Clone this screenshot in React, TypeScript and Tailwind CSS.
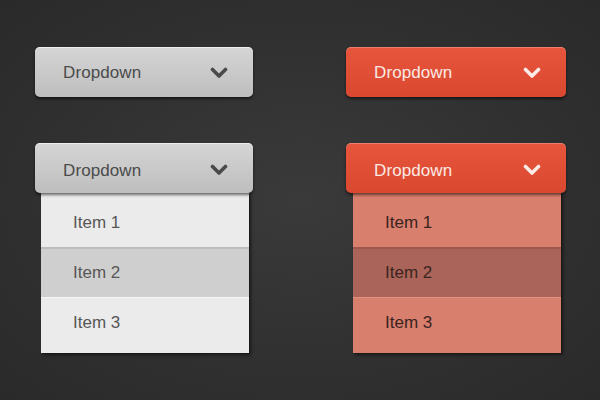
import React from "react";

type Variant = "gray" | "red";

function Chevron({ color }: { color: string }) {
	return (
		<svg width="18" height="12" viewBox="0 0 18 12" fill="none">
			<polyline
				points="2.5,2.5 9,9 15.5,2.5"
				stroke={color}
				strokeWidth="3.6"
				strokeLinecap="round"
				strokeLinejoin="round"
			/>
		</svg>
	);
}

function Button({ variant, open }: { variant: Variant; open?: boolean }) {
	const gray = variant === "gray";
	return (
		<div
			className={`relative z-10 flex items-center justify-between h-[50px] rounded-[5px] pl-7 pr-[25px] ${
				open ? "pt-[4px]" : "pt-px"
			} ${
				gray
					? "bg-gradient-to-b from-[#d5d5d5] to-[#bebebe] text-[#4b4b4b] shadow-[inset_0_1px_0_rgba(255,255,255,0.6),0_2px_3px_rgba(0,0,0,0.55)]"
					: "bg-gradient-to-b from-[#e6553c] to-[#d9482f] text-[#fbeae5] shadow-[inset_0_1px_0_rgba(255,255,255,0.25),0_2px_3px_rgba(0,0,0,0.55)]"
			}`}
		>
			<span className="text-[17px] leading-none tracking-[0.1px]">Dropdown</span>
			<Chevron color={gray ? "#4a4a4a" : "#fbeae5"} />
		</div>
	);
}

function Menu({ variant }: { variant: Variant }) {
	const gray = variant === "gray";
	const items = [
		{ label: "Item 1", h: "h-[54px] pt-[5px]", active: false },
		{ label: "Item 2", h: "h-[50px]", active: true },
		{ label: "Item 3", h: "h-[56px] pb-[5px]", active: false },
	];
	return (
		<div
			className={`ml-[6px] w-[208px] shadow-[1px_1px_0_#1a1a1a,2px_2px_3px_rgba(0,0,0,0.5)] ${
				gray ? "bg-[#ebebeb]" : "bg-[#d97f6e]"
			}`}
		>
			{items.map((item, i) => (
				<div
					key={item.label}
					className={`flex items-center pl-8 text-[17px] ${item.h} ${
						gray
							? item.active
								? "bg-[#cfcfcf] text-[#575757] border-t-2 border-[#bdbdbd]"
								: "text-[#575757]"
							: item.active
								? "bg-[#ab6459] text-[#3a2420] border-t-2 border-[#9d574d]"
								: "text-[#3a2420]"
					} ${i === 2 ? (gray ? "border-t border-[#f7f7f7]" : "border-t border-[#e3927f]") : ""}`}
				>
					{item.label}
				</div>
			))}
		</div>
	);
}

export default function App() {
	return (
		<div
			className="w-[600px] h-[400px] overflow-hidden bg-[radial-gradient(ellipse_at_center,#3a3a3a_0%,#303030_60%,#2a2a2a_100%)]"
			style={{ fontFamily: '"Liberation Sans", Arial, sans-serif' }}
		>
			<div className="grid grid-cols-[218px_220px] gap-x-[93px] gap-y-[46px] pl-[35px] pt-[47px]">
				<Button variant="gray" />
				<Button variant="red" />
				<div>
					<Button variant="gray" open />
					<Menu variant="gray" />
				</div>
				<div>
					<Button variant="red" open />
					<div className="ml-px">
						<Menu variant="red" />
					</div>
				</div>
			</div>
		</div>
	);
}
